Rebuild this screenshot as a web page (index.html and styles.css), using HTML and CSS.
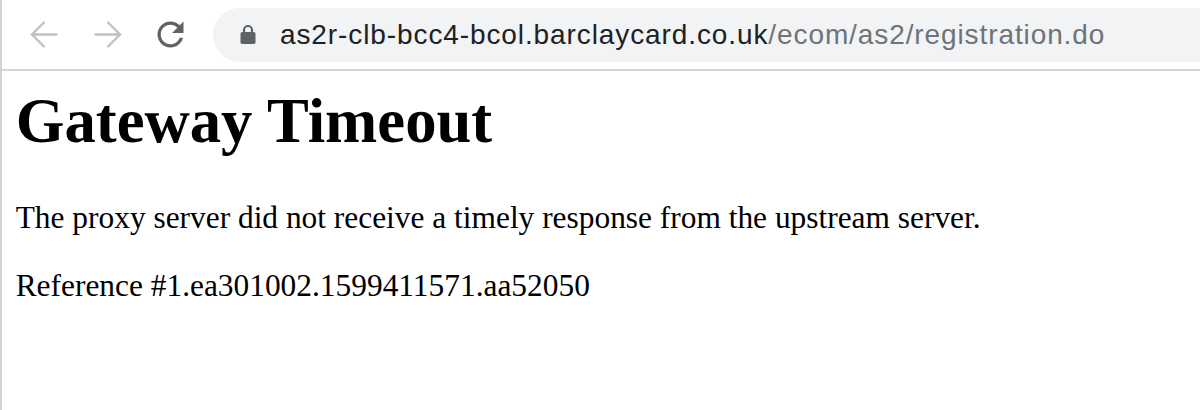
FILE: index.html
```html
<!DOCTYPE html>
<html lang="en">
<head>
<meta charset="utf-8">
<title>Gateway Timeout</title>
<link rel="stylesheet" href="styles.css">
</head>
<body>
<div class="window">
  <header class="toolbar">
    <div class="nav-btn">
      <svg class="icon" viewBox="0 0 24 24" width="39" height="39"><path d="M20 12H4.6M12 4.3 4.3 12l7.7 7.7" fill="none" stroke="#bfc1c5" stroke-width="1.5"/></svg>
    </div>
    <div class="nav-btn">
      <svg class="icon" viewBox="0 0 24 24" width="39" height="39"><path d="M4 12h15.4M12 4.3l7.7 7.7-7.7 7.7" fill="none" stroke="#bfc1c5" stroke-width="1.5"/></svg>
    </div>
    <div class="nav-btn">
      <svg class="icon" viewBox="0 0 24 24" width="39" height="39"><path d="M17.65 6.35C16.2 4.9 14.21 4 12 4c-4.42 0-7.99 3.58-7.99 8s3.57 8 7.99 8c3.73 0 6.84-2.55 7.73-6h-2.08c-.82 2.33-3.04 4-5.65 4-3.31 0-6-2.69-6-6s2.69-6 6-6c1.66 0 3.14.69 4.22 1.78L13 11h7V4l-2.35 2.35z" fill="#5f6368"/></svg>
    </div>
    <div class="omnibox">
      <svg class="lock" viewBox="0 0 16 20" width="16" height="20"><path d="M4 9V6a4 4 0 0 1 8 0v3" fill="none" stroke="#5f6368" stroke-width="2.2"/><rect x="0.5" y="8" width="15" height="12" rx="1.8" fill="#5f6368"/></svg>
      <span class="url"><span class="host">as2r-clb-bcc4-bcol.barclaycard.co.uk</span><span class="path">/ecom/as2/registration.do</span></span>
    </div>
  </header>
  <main class="content">
    <h1 class="title">Gateway Timeout</h1>
    <p class="msg">The proxy server did not receive a timely response from the upstream server.</p>
    <p class="msg">Reference&nbsp;#1.ea301002.1599411571.aa52050</p>
  </main>
</div>
</body>
</html>
```

FILE: styles.css
```css
html, body {
  margin: 0;
  padding: 0;
  background: #ffffff;
  overflow: hidden;
}

.window {
  width: 1200px;
  height: 410px;
  box-sizing: border-box;
  border-left: 2px solid #d2d2d2;
  overflow: hidden;
}

.toolbar {
  display: flex;
  align-items: center;
  height: 69px;
  border-bottom: 2px solid #d6d6d6;
  padding-left: 10.5px;
  box-sizing: content-box;
  background: #ffffff;
}

.nav-btn {
  width: 63px;
  height: 54px;
  display: flex;
  align-items: center;
  justify-content: center;
  flex: none;
}

.icon {
  display: block;
}

.omnibox {
  flex: 1;
  display: flex;
  align-items: center;
  height: 54px;
  margin-left: 11.5px;
  margin-right: -40px;
  border-radius: 27px;
  background: #f1f3f4;
  padding-left: 27px;
}

.lock {
  display: block;
  flex: none;
  margin-top: -1px;
}

.url {
  margin-left: 24px;
  font-family: "Liberation Sans", Arial, sans-serif;
  font-size: 28px;
  letter-spacing: 0.9px;
  white-space: nowrap;
  line-height: 1;
}

.host {
  color: #202124;
}

.path {
  color: #6f7378;
}

.content {
  padding: 0 13.7px;
  font-family: "Liberation Serif", "Times New Roman", serif;
  color: #000000;
}

.title {
  font-size: 62.7px;
  font-weight: bold;
  margin: 14.4px 0 42px 0;
  line-height: normal;
}

.msg {
  font-size: 31.4px;
  margin: 31.4px 0;
  line-height: normal;
}
```
